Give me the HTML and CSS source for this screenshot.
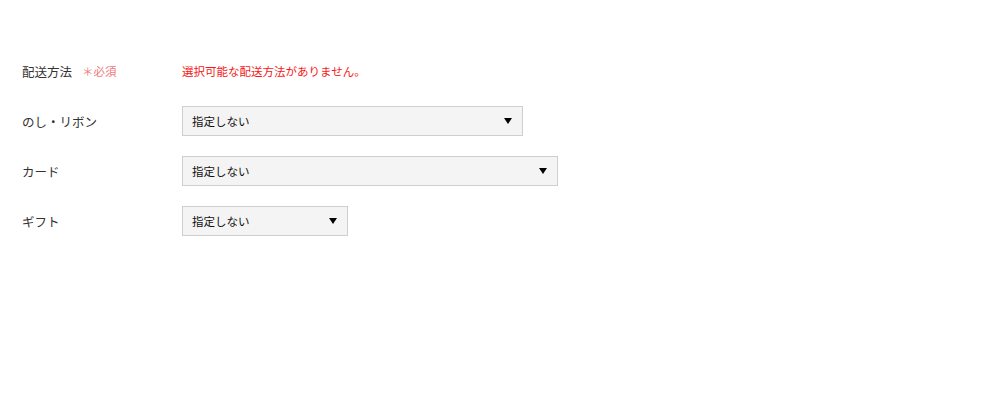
FILE: index.html
```html
<!DOCTYPE html>
<html lang="ja">
<head>
<meta charset="utf-8">
<link rel="stylesheet" href="styles.css">
</head>
<body>
<div class="form">
  <div class="row">
    <div class="label">配送方法<span class="req">＊必須</span></div>
    <div class="field"><span class="error">選択可能な配送方法がありません。</span></div>
  </div>
  <div class="row">
    <div class="label">のし・リボン</div>
    <div class="field">
      <div class="select w1"><span>指定しない</span><svg class="arrow" width="8" height="6" viewBox="0 0 8 6"><path d="M0 0H8L4 6Z"/></svg></div>
    </div>
  </div>
  <div class="row">
    <div class="label">カード</div>
    <div class="field">
      <div class="select w2"><span>指定しない</span><svg class="arrow" width="8" height="6" viewBox="0 0 8 6"><path d="M0 0H8L4 6Z"/></svg></div>
    </div>
  </div>
  <div class="row">
    <div class="label">ギフト</div>
    <div class="field">
      <div class="select w3"><span>指定しない</span><svg class="arrow" width="8" height="6" viewBox="0 0 8 6"><path d="M0 0H8L4 6Z"/></svg></div>
    </div>
  </div>
</div>
</body>
</html>
```
FILE: styles.css
```css
html, body {
  margin: 0;
  padding: 0;
  background: #fff;
}
body {
  font-family: "Noto Sans CJK JP", "Noto Sans", sans-serif;
  color: #333;
}
.form {
  display: flex;
  flex-direction: column;
  padding: 46px 0 0 22px;
}
.row {
  display: flex;
  align-items: center;
  height: 30px;
  padding: 10px 0 10px 0;
}
.label {
  width: 160px;
  font-size: 12.5px;
  color: #333;
  display: flex;
  align-items: center;
}
.req {
  color: #f27b7b;
  font-size: 11.5px;
  margin-left: 10px;
}
.field {
  display: flex;
  align-items: center;
}
.error {
  color: #f51818;
  font-size: 11.5px;
}
.select {
  box-sizing: border-box;
  height: 30px;
  border: 1px solid #cfcfcf;
  background: #f4f4f4;
  display: flex;
  align-items: center;
  justify-content: space-between;
  padding: 0 10px 0 9px;
  font-size: 11.5px;
  color: #111;
}
.w1 { width: 341px; }
.w2 { width: 376px; }
.w3 { width: 166px; }
.arrow {
  fill: #000;
  display: block;
}
```
